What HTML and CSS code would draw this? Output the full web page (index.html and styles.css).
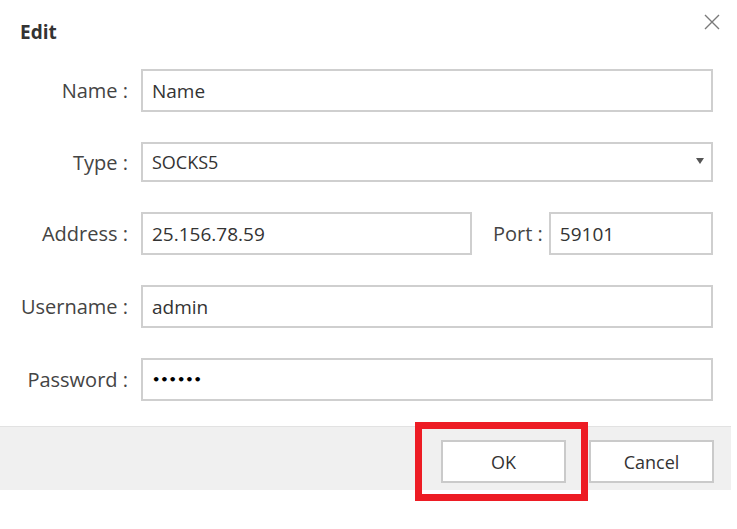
FILE: index.html
```html
<!DOCTYPE html>
<html lang="en">
<head>
    <meta charset="UTF-8">
    <meta name="viewport" content="width=device-width, initial-scale=1.0">
    <title>Edit</title>
    <link rel="stylesheet" href="styles.css">
</head>
<body>
    <div class="dialog">
        <div class="dialog-header">
            <h1 class="dialog-title">Edit</h1>
            <button type="button" class="close-btn" aria-label="Close">
                <svg width="16" height="16" viewBox="0 0 16 16">
                    <path d="M1 1 L15 15 M15 1 L1 15" stroke="#7a7a7a" stroke-width="1.4" fill="none"/>
                </svg>
            </button>
        </div>

        <form id="editForm" class="dialog-body">
            <div class="row">
                <label for="name">Name :</label>
                <input type="text" id="name" name="name" value="Name">
            </div>

            <div class="row">
                <label for="type">Type :</label>
                <div class="select-wrap">
                    <select id="type" name="type">
                        <option value="SOCKS5" selected>SOCKS5</option>
                        <option value="HTTP">HTTP</option>
                        <option value="HTTPS">HTTPS</option>
                    </select>
                    <span class="caret"></span>
                </div>
            </div>

            <div class="row">
                <label for="address">Address :</label>
                <div class="address-line">
                    <input type="text" id="address" name="address" value="25.156.78.59">
                    <label for="port" class="port-label">Port :</label>
                    <input type="text" id="port" name="port" value="59101" class="port-input">
                </div>
            </div>

            <div class="row">
                <label for="username">Username :</label>
                <input type="text" id="username" name="username" value="admin">
            </div>

            <div class="row">
                <label for="password">Password :</label>
                <input type="password" id="password" name="password" value="123456">
            </div>
        </form>

        <div class="dialog-footer">
            <div class="ok-wrap">
                <button type="submit" form="editForm" class="btn">OK</button>
                <span class="highlight"></span>
            </div>
            <button type="button" class="btn">Cancel</button>
        </div>
    </div>
</body>
</html>
```

FILE: styles.css
```css
html, body {
    min-height: 529px;
}
body {
    margin: 0;
    font-family: "Open Sans", Arial, sans-serif;
    background-color: white;
    color: #333;
}
.dialog {
    width: 731px;
    padding-bottom: 38px;
}
.dialog-header {
    display: flex;
    justify-content: space-between;
    align-items: flex-start;
    height: 69px;
}
.dialog-title {
    margin: 20px 0 0 20px;
    font-size: 19px;
    font-weight: bold;
    line-height: 24px;
    color: #333;
}
.close-btn {
    margin: 14px 11px 0 0;
    padding: 0;
    border: none;
    background: none;
    width: 16px;
    height: 16px;
    cursor: pointer;
}
.close-btn svg {
    display: block;
}
.dialog-body {
    padding: 0 18px 0 0;
    display: flex;
    flex-direction: column;
    gap: 30px;
}
.row {
    display: grid;
    grid-template-columns: 128px minmax(0, 1fr);
    column-gap: 13px;
    align-items: center;
}
label {
    text-align: right;
    font-size: 20px;
    color: #444;
    white-space: nowrap;
}
input, select {
    box-sizing: border-box;
    width: 100%;
    height: 43px;
    padding: 0 9px;
    border: 2px solid #cfcfcf;
    border-radius: 0;
    font-family: "Open Sans", Arial, sans-serif;
    font-size: 19px;
    color: #333;
    background-color: white;
    outline: none;
}
input[type="password"] {
    font-family: "DejaVu Sans", sans-serif;
    font-size: 13px;
    font-weight: bold;
    letter-spacing: 0;
    color: #000;
}
.select-wrap {
    position: relative;
}
select {
    height: 40px;
    appearance: none;
    -webkit-appearance: none;
    padding-left: 9px;
    font-size: 18px;
}
.caret {
    position: absolute;
    right: 9px;
    top: 16px;
    width: 0;
    height: 0;
    border-left: 4px solid transparent;
    border-right: 4px solid transparent;
    border-top: 6px solid #555;
    pointer-events: none;
}
.address-line {
    display: flex;
    align-items: center;
}
.address-line input {
    width: 331px;
    flex: none;
}
.port-label {
    margin-left: 21px;
    margin-right: 6px;
}
.address-line .port-input {
    flex: 1;
    width: 0;
    min-width: 0;
}
.dialog-footer {
    margin-top: 25px;
    border-top: 1px solid #e2e2e2;
    background-color: #f0f0f0;
    display: flex;
    justify-content: flex-end;
    align-items: flex-start;
    gap: 23px;
    padding: 13px 17px 0 0;
    box-sizing: border-box;
    height: 64px;
}
.btn {
    width: 125px;
    height: 43px;
    background-color: white;
    border: 2px solid #cacaca;
    font-family: "Open Sans", Arial, sans-serif;
    font-size: 18px;
    color: #333;
    cursor: pointer;
}
.ok-wrap {
    position: relative;
}
.ok-wrap .btn {
    display: block;
}
.highlight {
    position: absolute;
    left: -26px;
    top: -18px;
    right: -22px;
    bottom: -18px;
    border: 7px solid #ed1c24;
    pointer-events: none;
}
```
